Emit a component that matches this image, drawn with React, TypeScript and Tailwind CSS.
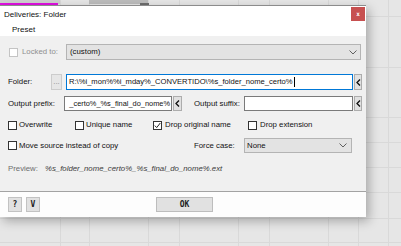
import React from "react";

const ui = { fontFamily: '"Liberation Sans", Arial, sans-serif' };
const pix = { fontFamily: '"DejaVu Sans Mono", "Liberation Mono", monospace' };

function Chevron() {
  return (
    <svg width="8" height="5" viewBox="0 0 8 5" className="shrink-0">
      <path d="M0.5 0.5 L4 4 L7.5 0.5" fill="none" stroke="#606060" strokeWidth="1" />
    </svg>
  );
}

function Check({ checked = false, disabled = false }: { checked?: boolean; disabled?: boolean }) {
  return (
    <div
      className={`w-[9px] h-[9px] shrink-0 bg-white border ${disabled ? "border-[#c4c4c4]" : "border-[#333333]"} flex items-center justify-center`}
    >
      {checked && (
        <svg width="7" height="7" viewBox="0 0 7 7">
          <path d="M0.8 3.6 L2.7 5.6 L6.3 1" fill="none" stroke="#222" strokeWidth="1" />
        </svg>
      )}
    </div>
  );
}

function Arrow({ w = "w-[8px]" }: { w?: string }) {
  return (
    <div className={`${w} h-full shrink-0 bg-[#e1e1e1] border border-[#adadad] flex items-center justify-center`}>
      <svg width="5" height="7" viewBox="0 0 5 7">
        <path d="M4 0.5 L1 3.5 L4 6.5" fill="none" stroke="#111" strokeWidth="1.3" />
      </svg>
    </div>
  );
}

const vLines = [60, 89, 148, 179, 238, 269, 328, 358, 388];
const hLines = [16, 67, 117, 142, 167, 192, 218, 242];

export default function App() {
  return (
    <div className="relative w-[401px] h-[246px] overflow-hidden bg-[#e6e6e6]" style={ui}>
      {/* spreadsheet grid behind the dialog */}
      {vLines.map((x) => (
        <div key={`v${x}`} className="absolute top-0 bottom-0 w-px bg-[#d9d9d9]" style={{ left: x }} />
      ))}
      {hLines.map((y) => (
        <div key={`h${y}`} className="absolute left-0 right-0 h-px bg-[#d9d9d9]" style={{ top: y }} />
      ))}

      {/* tabs peeking above */}
      <div className="absolute left-0 top-0 w-[60px] h-[4px] bg-[#cfcfcf]" />
      <div className="absolute left-0 top-[3px] w-[58px] h-[2px] bg-[#e010e0]" />
      <div className="absolute left-[89px] top-0 w-[59px] h-[4px] bg-[#bcbcbc]" />
      <div className="absolute left-[140px] top-[3px] w-[9px] h-[2px] bg-[#6e6e6e]" />

      {/* dialog window */}
      <div className="absolute left-0 top-[5px] w-[366px] h-[212px] flex flex-col border-t border-[#8c8c8c] shadow-[3px_4px_10px_rgba(0,0,0,0.28)]">
        <div className="relative h-[30px] bg-white flex flex-col text-[8px] text-[#111]">
          <div className="h-[18px] pl-[4px] flex items-center">Deliveries: Folder</div>
          <div className="h-[12px] pl-[12px] flex items-center">Preset</div>
          <div className="absolute top-[1px] right-[1px] w-[14px] h-[14px] bg-[#c75050] flex items-center justify-center">
            <span className="text-[6px] font-bold text-white leading-none" style={pix}>x</span>
          </div>
        </div>

        <div className="flex-1 bg-[#f0f0f0] flex flex-col text-[7.8px] text-[#111] whitespace-nowrap">
          {/* Locked to */}
          <div className="mt-[8px] h-[16px] flex items-center">
            <div className="w-[66px] pl-[9px] flex items-center gap-[4px] shrink-0">
              <Check disabled />
              <span className="text-[#8f8f8f]">Locked to:</span>
            </div>
            <div className="w-[295px] h-full bg-[#e3e3e3] border border-[#b4b4b4] flex items-center justify-between pl-[3px] pr-[3px]">
              <span>(custom)</span>
              <Chevron />
            </div>
          </div>

          {/* Folder */}
          <div className="mt-[14px] h-[16px] flex items-center">
            <div className="w-[51px] pl-[8px] shrink-0">Folder:</div>
            <div className="w-[11px] h-full bg-[#e6e6e6] border border-[#cccccc] flex items-center justify-center text-[#8a8a8a] shrink-0">
              ...
            </div>
            <div className="ml-[4px] w-[287px] h-full bg-white border border-[#0078d7] flex items-center pl-[2px] overflow-hidden text-[7.6px]">
              <span>R:\%i_mon%%i_mday%_CONVERTIDO\%s_folder_nome_certo%</span>
              <span className="w-px h-[10px] bg-black ml-px" />
            </div>
            <div className="ml-[1px] h-full flex">
              <Arrow />
            </div>
          </div>

          {/* Output prefix / suffix */}
          <div className="mt-[6px] h-[15px] flex items-center">
            <div className="w-[64px] pl-[8px] shrink-0">Output prefix:</div>
            <div className="w-[108px] h-full bg-white border border-[#7a7a7a] flex items-center justify-end pr-[1px] overflow-hidden text-[7.4px]">
              <span>_certo%_%s_final_do_nome%</span>
            </div>
            <div className="ml-[1px] h-full flex">
              <Arrow w="w-[9px]" />
            </div>
            <div className="w-[62px] pl-[12px] shrink-0">Output suffix:</div>
            <div className="w-[109px] h-full bg-white border border-[#7a7a7a]" />
            <div className="ml-[1px] h-full flex">
              <Arrow />
            </div>
          </div>

          {/* options row 1 */}
          <div className="mt-[7px] h-[14px] flex items-center">
            <div className="w-[75px] pl-[8px] flex items-center gap-[2px] shrink-0">
              <Check />
              <span>Overwrite</span>
            </div>
            <div className="w-[78px] flex items-center gap-[2px] shrink-0">
              <Check />
              <span>Unique name</span>
            </div>
            <div className="w-[95px] flex items-center gap-[3px] shrink-0">
              <Check checked />
              <span>Drop original name</span>
            </div>
            <div className="flex items-center gap-[3px]">
              <Check />
              <span>Drop extension</span>
            </div>
          </div>

          {/* options row 2 */}
          <div className="mt-[6px] h-[15px] flex items-center">
            <div className="w-[194px] pl-[8px] flex items-center gap-[2px] shrink-0">
              <Check />
              <span>Move source instead of copy</span>
            </div>
            <div className="w-[50px] shrink-0">Force case:</div>
            <div className="w-[108px] h-full bg-[#e3e3e3] border border-[#b4b4b4] flex items-center justify-between pl-[2px] pr-[4px]">
              <span>None</span>
              <Chevron />
            </div>
          </div>

          {/* preview */}
          <div className="mt-[9px] h-[14px] flex items-center">
            <div className="w-[45px] pl-[8px] shrink-0 text-[#6e6e6e]">Preview:</div>
            <div className="italic text-[#3c3c3c]">%s_folder_nome_certo%_%s_final_do_nome%.ext</div>
          </div>
        </div>

        <div className="h-[26px] bg-[#fdfdfd] border-t border-[#a3a3a3] flex items-start pt-[5px] pl-[8px]">
          <div className="w-[14px] h-[15px] bg-[#e1e1e1] border border-[#c2c2c2] flex items-center justify-center text-[8px] font-bold text-[#222]" style={pix}>
            ?
          </div>
          <div className="ml-[4px] w-[14px] h-[15px] bg-[#e1e1e1] border border-[#c2c2c2] flex items-center justify-center text-[8px] font-bold text-[#222]" style={pix}>
            V
          </div>
          <div className="ml-[116px] w-[57px] h-[15px] bg-[#e1e1e1] border border-[#bdbdbd] flex items-center justify-center text-[8px] font-bold text-[#222]" style={pix}>
            OK
          </div>
        </div>
      </div>
    </div>
  );
}
